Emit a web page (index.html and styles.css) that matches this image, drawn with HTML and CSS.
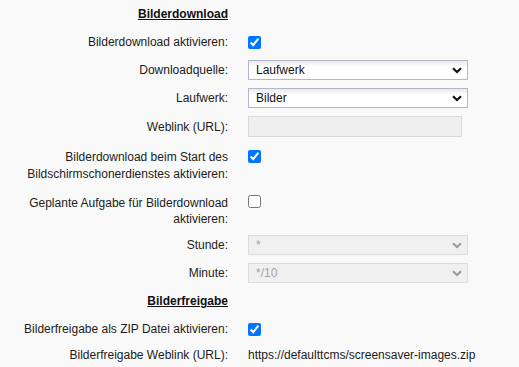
FILE: index.html
```html
<!DOCTYPE html>
<html lang="de">
<head>
<meta charset="utf-8">
<title>Bilderdownload</title>
<link rel="stylesheet" href="styles.css">
</head>
<body>
<div class="form">
  <div class="label heading">Bilderdownload</div>
  <div class="control"></div>

  <div class="label">Bilderdownload aktivieren:</div>
  <div class="control"><input type="checkbox" checked></div>

  <div class="label">Downloadquelle:</div>
  <div class="control">
    <div class="select"><span>Laufwerk</span>
      <svg class="chev" width="10" height="7" viewBox="0 0 10 7"><path d="M1 1.2 L5 5 L9 1.2" fill="none" stroke="currentColor" stroke-width="2.2"/></svg>
    </div>
  </div>

  <div class="label">Laufwerk:</div>
  <div class="control">
    <div class="select"><span>Bilder</span>
      <svg class="chev" width="10" height="7" viewBox="0 0 10 7"><path d="M1 1.2 L5 5 L9 1.2" fill="none" stroke="currentColor" stroke-width="2.2"/></svg>
    </div>
  </div>

  <div class="label">Weblink (URL):</div>
  <div class="control"><div class="input disabled"></div></div>

  <div class="label multi">Bilderdownload beim Start des<br>Bildschirmschonerdienstes aktivieren:</div>
  <div class="control top multi-cb"><input type="checkbox" checked></div>

  <div class="label multi2">Geplante Aufgabe für Bilderdownload<br>aktivieren:</div>
  <div class="control top"><input type="checkbox"></div>

  <div class="label">Stunde:</div>
  <div class="control">
    <div class="select disabled"><span>*</span>
      <svg class="chev" width="10" height="7" viewBox="0 0 10 7"><path d="M1 1.2 L5 5 L9 1.2" fill="none" stroke="currentColor" stroke-width="2.2"/></svg>
    </div>
  </div>

  <div class="label">Minute:</div>
  <div class="control">
    <div class="select disabled"><span>*/10</span>
      <svg class="chev" width="10" height="7" viewBox="0 0 10 7"><path d="M1 1.2 L5 5 L9 1.2" fill="none" stroke="currentColor" stroke-width="2.2"/></svg>
    </div>
  </div>

  <div class="label heading">Bilderfreigabe</div>
  <div class="control"></div>

  <div class="label">Bilderfreigabe als ZIP Datei aktivieren:</div>
  <div class="control"><input type="checkbox" checked></div>

  <div class="label text-row">Bilderfreigabe Weblink (URL):</div>
  <div class="control text-row">https://defaulttcms/screensaver-images.zip</div>
</div>
</body>
</html>
```

FILE: styles.css
```css
html, body {
  margin: 0;
  padding: 0;
  background: #f9f9f9;
}

body {
  font-family: "Liberation Sans", Arial, sans-serif;
  font-size: 12px;
  color: #1c1c1c;
  width: 519px;
  height: 367px;
  overflow: hidden;
}

.form {
  display: grid;
  grid-template-columns: 228px 1fr;
  column-gap: 20px;
  row-gap: 8px;
  padding-top: 4px;
  align-items: center;
}

.label {
  text-align: right;
  line-height: 16px;
  min-height: 20px;
  display: flex;
  align-items: center;
  justify-content: flex-end;
}

.control {
  min-height: 20px;
  display: flex;
  align-items: center;
  line-height: 16px;
}

.heading {
  font-weight: bold;
  text-decoration: underline;
  color: #111;
}

.label.multi {
  display: block;
  line-height: 17px;
  padding: 4px 0;
  align-self: start;
}

.control.top {
  align-self: start;
  align-items: flex-start;
}

.control.multi-cb {
  padding-top: 5px;
}

.label.multi2 {
  display: block;
  line-height: 16px;
  align-self: start;
}

.text-row {
  min-height: 16px;
}

input[type="checkbox"] {
  margin: 0;
  width: 13px;
  height: 13px;
  accent-color: #0075ff;
}

.select {
  position: relative;
  box-sizing: border-box;
  width: 220px;
  height: 20px;
  border: 1px solid #b3b7c9;
  background: linear-gradient(#e7e9ef 0, #ffffff 6px);
  padding-left: 7px;
  display: flex;
  align-items: center;
  color: #111;
}

.select .chev {
  position: absolute;
  right: 5px;
  top: 6px;
  color: #111;
}

.select.disabled {
  background: #f0f0f0;
  border-color: #dcdcdc;
  color: #a3a3a3;
}

.select.disabled .chev {
  color: #9c9c9c;
}

.input {
  box-sizing: border-box;
  width: 214px;
  height: 21px;
  border: 1px solid #dadada;
  background: #efefef;
}
```
